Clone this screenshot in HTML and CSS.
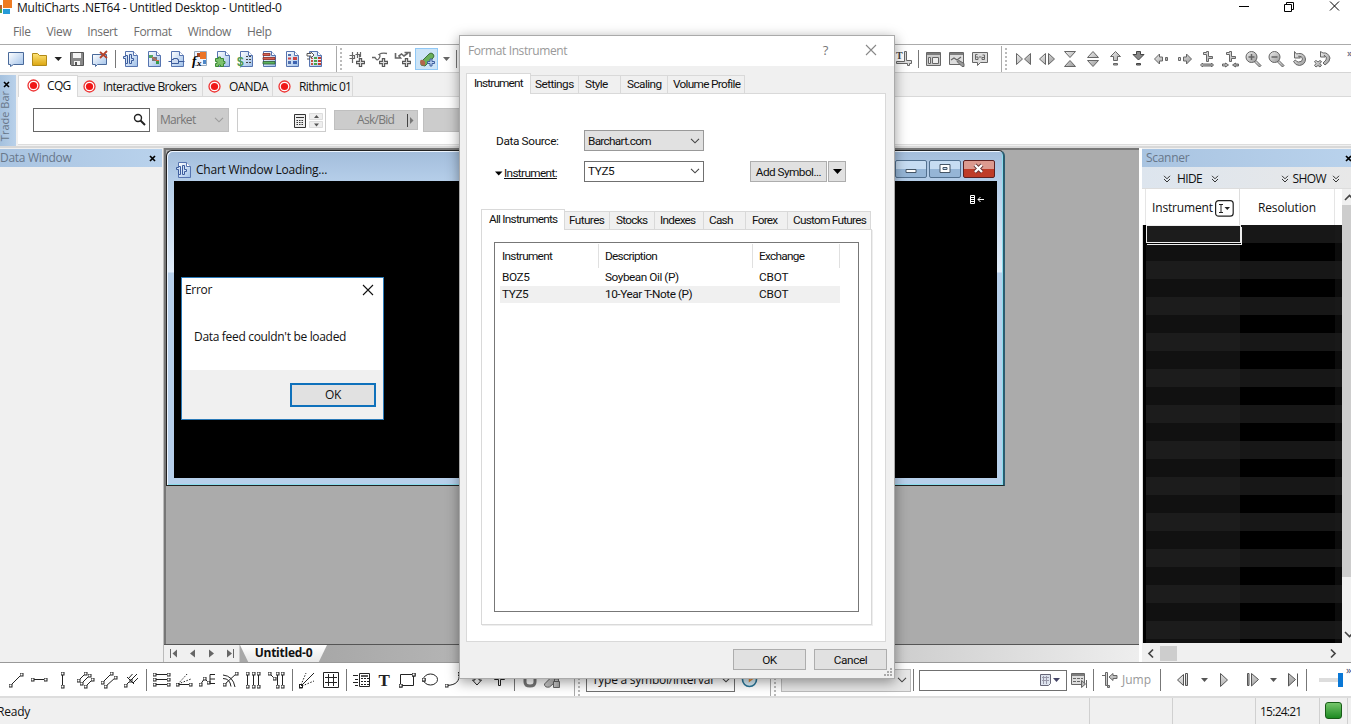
FILE: index.html
```html
<!DOCTYPE html>
<html lang="en">
<head>
<meta charset="utf-8">
<title>MultiCharts .NET64</title>
<link rel="stylesheet" href="styles.css">
</head>
<body>
<svg class="defs" aria-hidden="true">
  <defs>
    <linearGradient id="blue" x1="0" y1="0" x2="1" y2="1"><stop offset="0" stop-color="#fff"/><stop offset="1" stop-color="#9dbfe8"/></linearGradient>
    <linearGradient id="gray" x1="0" y1="0" x2="1" y2="1"><stop offset="0" stop-color="#eee"/><stop offset="1" stop-color="#999"/></linearGradient>
    <linearGradient id="gold" x1="0" y1="0" x2="0" y2="1"><stop offset="0" stop-color="#ffe57a"/><stop offset="1" stop-color="#dba510"/></linearGradient>
    <marker id="h" markerWidth="4" markerHeight="4" refX="2" refY="2" markerUnits="userSpaceOnUse"><rect x=".5" y=".5" width="3" height="3" fill="#fff" stroke="#222"/></marker>
    <symbol id="doc" viewBox="0 0 23 22"><path d="M6.500 3.500h8l4 4v11h-12z" fill="url(#blue)" stroke="#5674b0"/><path d="M14.500 3.500v4h4" fill="#fff" stroke="#5674b0"/></symbol>
    <symbol id="bars" viewBox="0 0 23 22"><path d="M4.500 8.500h2v-1h2v8h-2v-5h-2zM10.500 6.500h2v4h2v2h-2v3h-2z" fill="#cfe0f6" stroke="#3c5c9c"/></symbol>
    <symbol id="plus" viewBox="0 0 8 8"><path d="M3 .5h2v2.500h2.500v2H5v2.500H3V5H.5V3H3z" fill="#ddd" stroke="#555"/></symbol>
    <symbol id="chev" viewBox="0 0 10 6"><path d="M1 .8l4 4 4-4" fill="none" stroke="#444" stroke-width="1.100"/></symbol>
    <symbol id="live" viewBox="0 0 13 13"><circle cx="6.500" cy="6.500" r="5.500" fill="#fff" stroke="#e33" stroke-width="1.300"/><circle cx="6.500" cy="6.500" r="3.600" fill="#f01818"/></symbol>
    <symbol id="dbl" viewBox="0 0 8 8"><path d="M1 .8l3 3 3-3M1 4l3 3 3-3" fill="none" stroke="#333"/></symbol>
  </defs>
</svg>
<div class="app">
  <header class="titlebar">
    <svg class="logo" width="12" height="15" viewBox="0 0 12 15"><path d="M3 0h9v8H3z" fill="#ef7b22"/><path d="M0 5h2v4H0z" fill="#b9602a"/><path d="M0 9h2v4H0z" fill="#55a046"/><path d="M3 9h7v5H3z" fill="#269bd8"/></svg>
    <span class="apptitle">MultiCharts .NET64 - Untitled Desktop - Untitled-0</span>
    <svg class="winbtns" width="110" height="20" viewBox="0 0 110 20" fill="none" stroke="#000"><path d="M-1 6.500h10M44.500 4.500h7v7h-7zM46.500 4.500v-2h7v7h-2M90 1.500l9 9M99 1.500l-9 9"/></svg>
  </header>
  <nav class="menu"><span>File</span><span>View</span><span>Insert</span><span>Format</span><span>Window</span><span>Help</span></nav>

  <div class="toolbar top">
    <svg class="ic" viewBox="0 0 23 22"><path d="M3.500 4.500h15v12h-10l-3 2v-2h-2z" fill="url(#blue)" stroke="#49699a"/></svg>
    <svg class="ic" viewBox="0 0 23 22"><path d="M4.500 5.500h5l2 2h7v10h-14z" fill="url(#gold)" stroke="#b18a18"/></svg>
    <svg class="dd" viewBox="0 0 14 22"><path d="M3.500 9h7.500l-3.700 4z" fill="#222"/></svg>
    <svg class="ic" viewBox="0 0 23 22"><path d="M5.500 4.500h13v13h-12l-1-1z" fill="#888" stroke="#555"/><path d="M8 5h8v5H8zM9 13h6v4H9z" fill="#f5f5f5"/><path d="M10 14h2v3h-2z" fill="#555"/></svg>
    <svg class="ic" viewBox="0 0 23 22"><path d="M4.500 6.500h14v10h-9l-2 2v-2h-3z" fill="url(#blue)" stroke="#49699a"/><path d="M12 4l7 6M19 3l-7 7" stroke="#b5432c" stroke-width="1.800"/></svg>
    <i class="sep s1"></i>
    <svg class="ic" viewBox="0 0 23 22"><use href="#doc"/><use href="#bars"/></svg>
    <svg class="ic" viewBox="0 0 23 22"><use href="#doc"/><path d="M7 7h4v3H7z" fill="#55a860"/><path d="M10 9h5v4h-5z" fill="#777"/><path d="M10 9l5 4M15 12.500h2" stroke="#e64"/><path d="M14 13h3v3h-3z" fill="#3a9a4a"/></svg>
    <svg class="ic" viewBox="0 0 23 22"><use href="#doc"/><path d="M3.500 13.500h3M6.500 11.500h2v-1h4v1h1v4h-7zM13.500 13.500h6" fill="#cddbf0" stroke="#3c5c9c"/></svg>
    <svg class="ic" viewBox="0 0 23 22"><path d="M6.500 3.500h12v14h-12z" fill="#eef4ff" stroke="#9ab"/><path d="M12 4h6v7h-6z" fill="#ec7425"/><path d="M9 5h3v4H9z" fill="#a8471f"/><text x="4" y="17" class="fx">f</text><text x="9" y="18" class="fxs">x</text><path d="M15 12h3v4h-3z" fill="#4b86c8"/></svg>
    <svg class="ic" viewBox="0 0 23 22"><use href="#doc"/><path d="M4.500 10.500h3V9h2v1.500h3v3h1.500v2h-1.500v3H9.500V17h-2v1.500h-3v-3H6v-2H4.500z" fill="#7cc16c" stroke="#3b8a36"/></svg>
    <svg class="ic" viewBox="0 0 23 22"><use href="#doc"/><text x="3" y="18" class="dollar">$</text><path d="M12 8.500h2M15 8.500h2M12 11.500h2M15 11.500h2M12 14.500h2M15 14.500h2" stroke="#444"/></svg>
    <svg class="ic" viewBox="0 0 23 22"><use href="#doc"/><path d="M6 5.500h7v2H6zM6 9.500h12v2H6z" fill="#d8604e" stroke="#8a2a22" stroke-width=".8"/><path d="M6 13.500h12v2.500H6z" fill="#5bb35c" stroke="#2b5a36" stroke-width=".8"/></svg>
    <svg class="ic" viewBox="0 0 23 22"><use href="#doc"/><path d="M8 6h3v2H8zM8 13h3v3H8z" fill="#5070b0"/><path d="M8 9.500h3v2H8zM13 9h4v3h-4z" fill="#c44"/><path d="M13 13h4v3h-4z" fill="#3d63b0"/></svg>
    <svg class="ic" viewBox="0 0 23 22"><use href="#doc"/><path d="M4 5.500h4V4l3 3-3 3V8H4zM4 11h3" fill="#fff" stroke="#555"/><path d="M8 10h2v7H8z" fill="#c55444"/><path d="M11 9h3v8h-3z" fill="#4aa34e"/><path d="M15 9h3v8h-3z" fill="#c33b2e"/><path d="M8 11.500h10M8 14.500h10" stroke="#eee"/></svg>
    <i class="sep grip s2"></i>
    <svg class="ic gs" viewBox="0 0 23 22"><path d="M6.500 4v11M3.500 7.500h5v3h-5M11.500 4v6M9.500 6.500h4v3M14.500 4v5" stroke-width="1.200"/><use href="#plus" x="10" y="10" width="9" height="9"/></svg>
    <svg class="ic gs" viewBox="0 0 23 22"><path d="M3 9.500h3q2 4 4 1t0-4q3-2 8-1" stroke-width="1.300"/><use href="#plus" x="10" y="10" width="9" height="9"/></svg>
    <svg class="ic gs" viewBox="0 0 23 22"><path d="M3.500 5v5h5L7 8l2.500-2L12 8l4-3M12.500 4.500H18V9" stroke-width="1.600"/><use href="#plus" x="10" y="10" width="9" height="9"/></svg>
    <svg class="ic hot" viewBox="0 0 23 22"><path d="M6 14l8-8q2-2 4 0t0 4l-8 8-4-1z" fill="#69b05a" stroke="#3f6f3c"/><path d="M5 14q0-3 3-2t2 5q-4 2-5-3z" fill="#b3654b"/><path d="M15 11h2v2.500h2.500v2H17V18h-2v-2.500h-2.500v-2H15z" fill="#b9d0ef" stroke="#3e5f9e"/></svg>
    <svg class="dd w15" viewBox="0 0 15 22"><path d="M5 9h7l-3.500 4z" fill="#666"/></svg>
    <i class="sep s3"></i>
    <i class="covered"></i>
    <svg class="ic gs" viewBox="0 0 23 22"><text x="3" y="11" class="tee">T</text><path d="M11.500 3.500h2v9h5v3h-2v2h-2v-2h-11v-2h8z" fill="#ddd"/></svg>
    <i class="sep s4"></i>
    <svg class="ic gs" viewBox="0 0 23 22"><path d="M4.500 4.500h14v13h-14z" fill="#ccc"/><path d="M5 6h13" stroke-width="1.600"/><path d="M6.500 9.500h2v6h-2zM10.500 9.500h6v6h-6z" fill="#eee"/></svg>
    <svg class="ic gs" viewBox="0 0 23 22"><path d="M4.500 4.500h14v12h-14z" fill="#ddd"/><path d="M5 6h13" stroke-width="1.600"/><path d="M6 12l3-2 3 2 4-3" stroke-width="1.200"/><path d="M12 13.500l2-1 5 3v3h-2z" fill="#999"/></svg>
    <svg class="ic gs" viewBox="0 0 23 22"><path d="M4.500 4.500h15v10h-7l-3 3v-3h-5z" fill="#ddd"/><path d="M9.500 6.500H7.500v5h2.500v-2.500H8M11 9h2.500M14.500 7h2v4.500h-2.500V9.500h2"/></svg>
    <i class="sep grip s5"></i>
    <svg class="ic gf" viewBox="0 0 23 22"><path d="M4.500 5.500l6 5.500-6 5.500zM18.500 5.500l-6 5.500 6 5.500z"/></svg>
    <svg class="ic gf" viewBox="0 0 23 22"><path d="M10.500 5.500l-6 5.500 6 5.500zM13.500 5.500l6 5.500-6 5.500z"/></svg>
    <svg class="ic gf" viewBox="0 0 23 22"><path d="M6.500 3.500h11L12 9.500zM6.500 18.500h11l-5.500-6z"/></svg>
    <svg class="ic gf" viewBox="0 0 23 22"><path d="M6.500 9.500h11L12 3.500zM6.500 12.500h11l-5.500 6z"/></svg>
    <svg class="ic gf" viewBox="0 0 23 22"><path d="M11.500 3.500l5 5h-3v4h-4v-4h-3zM9.500 15.500h4v1.500h-4z"/></svg>
    <svg class="ic gf dk" viewBox="0 0 23 22"><path d="M9.500 3.500h4v3h3.500l-5.500 5.500L6 6.500h3.500zM9.500 15.500h4v1.500h-4z"/></svg>
    <svg class="ic gf" viewBox="0 0 23 22"><path d="M4.500 11l5-5v3h3v4h-3v3zM15.500 9.500h2v3h-2z"/></svg>
    <svg class="ic gf" viewBox="0 0 23 22"><path d="M18.500 11l-5-5v3h-3v4h3v3zM5.500 9.500h2v3h-2z"/></svg>
    <svg class="ic gf" viewBox="0 0 23 22"><path d="M10.500 3.500h2v5h4v2h-4v3h-2v-7h-3v-2h3zM4.500 17l2-2v1h9v-1l2 2-2 2v-1h-9v1z"/></svg>
    <svg class="ic gf" viewBox="0 0 23 22"><path d="M10.500 3.500h2v5h4v2h-4v3h-2v-7h-3v-2h3zM3.500 16h3v-1l3 2-3 2v-1h-3zM19.500 16h-3v-1l-3 2 3 2v-1h3z"/></svg>
    <svg class="ic gf" viewBox="0 0 23 22"><path d="M14 12.500l5 5-1.500 1.500-5-5z"/><circle cx="9.500" cy="9" r="5.500"/><path d="M6.500 9h6M9.500 6v6" stroke-width="1.500"/></svg>
    <svg class="ic gf" viewBox="0 0 23 22"><path d="M14 12.500l5 5-1.500 1.500-5-5z"/><circle cx="9.500" cy="9" r="5.500"/><path d="M6.500 9h6" stroke-width="1.500"/></svg>
    <svg class="ic gf" viewBox="0 0 23 22"><path d="M6.500 3.500v6.500h6l-2-2q4 0 4 3t-4 3q-2 0-3-2l-2 1.500q2 4 6 4 6-1 6-6.500-1-6-7-5.500l-2 .5z"/></svg>
    <svg class="ic gf" viewBox="0 0 23 22"><path d="M9.500 3.500v5.500h5l-1.500-2q4 2 2 5l-3 3 2 2q5-3 5-7-2-6-7-5z"/><path d="M3.500 13.500l1.500-1 2 1.500 2-1.500 1.500 1-1.500 2 1.500 2-1.500 1.500-2-1.500-2 1.500-1.500-1.500 1.500-2z"/></svg>
    <b class="more">»</b>
  </div>

  <section class="trade">
    <aside class="strip"><svg width="7" height="7" viewBox="0 0 7 7"><path d="M1 1l5 5M6 1L1 6" stroke="#000" stroke-width="1.600"/></svg><span>Trade Bar</span></aside>
    <div class="tradebody">
      <div class="brokers">
        <span class="on b1"><svg width="13" height="13"><use href="#live"/></svg>CQG</span><span class="b2"><svg width="13" height="13"><use href="#live"/></svg>Interactive Brokers</span><span class="b3"><svg width="13" height="13"><use href="#live"/></svg>OANDA</span><span class="b4"><svg width="13" height="13"><use href="#live"/></svg>Rithmic 01</span>
      </div>
      <div class="orderrow">
        <div class="search"><svg width="13" height="13" viewBox="0 0 13 13" fill="none" stroke="#222"><circle cx="5" cy="5" r="3.500" stroke-width="1.400"/><path d="M7.500 7.500l4.500 4.500" stroke-width="2"/></svg></div>
        <div class="market">Market<svg width="10" height="6" opacity=".35"><use href="#chev"/></svg></div>
        <div class="qty"><svg width="30" height="16" viewBox="0 0 30 16"><path d="M.5 1.500h11v13H.5z" fill="#eee" stroke="#333"/><path d="M2 4.500h8" stroke="#333"/><path d="M2.500 7.500h7M2.500 9.500h7M2.500 11.500h7" stroke="#333" stroke-dasharray="1.500 1"/><path d="M15.500 .5h13v6h-13zM15.500 8.500h13v6h-13z" fill="#eee" stroke="#ddd"/><path d="M20 5h5l-2.500-3zM20 10.500h5l-2.500 3z" fill="#555"/></svg></div>
        <div class="ask"><span>Ask/Bid</span><svg width="8" height="13" viewBox="0 0 8 13"><path d="M1.500 0v13" stroke="#444"/><path d="M4 3l3.500 3.500L4 10z" fill="#777"/></svg></div>
        <div class="blank"></div>
      </div>
    </div>
  </section>

  <main class="main">
    <aside class="datawin"><div class="panelhead"><span>Data Window</span><svg width="7" height="7" viewBox="0 0 7 7"><path d="M1 1l5 5M6 1L1 6" stroke="#000" stroke-width="1.700"/></svg></div></aside>
    <section class="mdi">
      <div class="canvas">
        <div class="chartwin">
          <div class="charthead"><svg width="17" height="17" viewBox="4 2 17 17"><use href="#doc" width="23" height="22"/><use href="#bars" width="23" height="22"/></svg><span>Chart Window Loading...</span>
            <div class="mdibtns"><i><svg width="30" height="16" viewBox="0 0 30 16"><path d="M10 8.500h10v3H10z" fill="#fff" stroke="#456"/></svg></i><i><svg width="30" height="16" viewBox="0 0 30 16"><path d="M10 3.500h10v8H10zM13 6.500h4v2h-4z" fill="#fff" stroke="#456" fill-rule="evenodd"/></svg></i><i class="x"><svg width="30" height="16" viewBox="0 0 30 16"><path d="M11 4l7 7M18 4l-7 7" stroke="#633" stroke-width="4"/><path d="M11 4l7 7M18 4l-7 7" stroke="#fff" stroke-width="2.300"/></svg></i></div>
          </div>
          <div class="plot"><svg width="16" height="10" viewBox="0 0 16 10"><path d="M1.500 .5h4v8h-4zM1.500 2.500h4M1.500 4.500h4M1.500 6.500h4M9 4.500h6M11.500 2L9 4.500 11.500 7" fill="none" stroke="#fff"/></svg></div>
        </div>
      </div>
      <div class="sheets">
        <svg width="76" height="18" viewBox="0 0 76 18" fill="#666"><path d="M6.500 4v9" stroke="#666"/><path d="M13 4.500v8L8.500 8.500zM31 4.500v8L26 8.500zM45 4.500v8l5-4zM63 4.500v8l5-4z"/><path d="M69.500 4v9" stroke="#666"/></svg>
        <span class="sheet"><b>Untitled-0</b></span>
      </div>
    </section>
    <aside class="scanner">
      <div class="panelhead"><span>Scanner</span><svg width="7" height="7" viewBox="0 0 7 7"><path d="M1 1l5 5M6 1L1 6" stroke="#000" stroke-width="1.700"/></svg></div>
      <div class="hideshow"><svg width="8" height="8"><use href="#dbl"/></svg><span class="hide">HIDE</span><svg width="8" height="8"><use href="#dbl"/></svg><i></i><svg width="8" height="8"><use href="#dbl"/></svg><span class="show">SHOW</span><svg width="8" height="8"><use href="#dbl"/></svg></div>
      <div class="grid">
        <div class="gridmain">
          <div class="cols"><div class="c1">Instrument<svg width="19" height="17" viewBox="0 0 19 17"><rect x=".6" y=".6" width="17.600" height="15.600" rx="3" fill="#fff" stroke="#222" stroke-width="1.200"/><path d="M4 4.500h4M6 4.500v8M4 12.500h4" stroke="#222"/><path d="M9.500 7h5.500l-2.700 3z" fill="#222"/></svg></div><div class="c2">Resolution</div></div>
          <div class="rows"><div class="r1"><div class="cell"></div></div><div class="r2"></div><div class="r3"></div></div>
        </div>
        <div class="vscroll"><svg width="9" height="16" viewBox="0 0 9 16"><path d="M3 11l4.500-4.500L12 11" fill="none" stroke="#444" stroke-width="1.600"/></svg><i></i><svg width="9" height="16" viewBox="0 0 9 16"><path d="M3 5l4.500 4.500L12 5" fill="none" stroke="#444" stroke-width="1.600"/></svg></div>
      </div>
      <div class="hscroll"><svg width="18" height="17" viewBox="0 0 18 17"><path d="M11 4.500L7 8.500l4 4" fill="none" stroke="#444" stroke-width="1.700"/></svg><i></i><svg class="end" width="18" height="17" viewBox="0 0 18 17"><path d="M7 4.500l4 4-4 4" fill="none" stroke="#444" stroke-width="1.700"/></svg></div>
    </aside>
  </main>

  <div class="toolbar bottom">
    <svg class="ic dr" viewBox="0 0 23 22"><path d="M5.500 16.500L16.500 5.500"/></svg>
    <svg class="ic dr" viewBox="0 0 23 22"><path d="M4.500 10.500H17.500"/></svg>
    <svg class="ic dr" viewBox="0 0 23 22"><path d="M11.500 4.500V17.500"/></svg>
    <svg class="ic dr" viewBox="0 0 23 22"><path d="M4.500 11.500L11.500 4.500M7.500 14.500L15.500 6.500M11.500 17.500L18.500 10.500"/></svg>
    <svg class="ic dr" viewBox="0 0 23 22"><path d="M5.500 13.500L14.500 4.500M8.500 17.500L18.500 8.500"/></svg>
    <svg class="ic dr" viewBox="0 0 23 22"><path d="M5.500 16.500L10.500 11.500"/><path class="nm" d="M7 8l7 7M10.500 11.500L17 5M8.500 9.500l4-4.500M13 14l5-5"/></svg>
    <i class="sep t1"></i>
    <svg class="ic dr" viewBox="0 0 23 22"><path d="M4.500 5.500H18.500M4.500 10.500H18.500M4.500 15.500H18.500"/></svg>
    <svg class="ic dr" viewBox="0 0 23 22"><path d="M4.500 15.500H17.500"/><path class="nm" stroke-dasharray="1.500 1.500" d="M5 15L15 4M5 15l13-5"/></svg>
    <svg class="ic dr" viewBox="0 0 23 22"><path d="M4.500 15.500L8.500 9.500L12.500 13.500"/><path class="nm" d="M19 5.500h-5v9h5M14 10h5"/></svg>
    <svg class="ic dr" viewBox="0 0 23 22"><path d="M5.500 15.500L17.500 4.500"/><path class="nm" d="M4 6q10 1 12 12M4 9.500q7 0 8 8"/></svg>
    <svg class="ic dr" viewBox="0 0 23 22"><path d="M5.500 4.500V17.500M11.500 4.500V17.500M16.500 4.500V17.500"/></svg>
    <svg class="ic dr" viewBox="0 0 23 22"><path d="M4.500 4.500L9.500 9.500M12.500 4.500V17.500M17.500 4.500V17.500"/></svg>
    <i class="sep t2"></i>
    <svg class="ic dr" viewBox="0 0 23 22"><path d="M4.500 17.500L5 17"/><path class="nm" d="M5 17L18 4"/><path class="nm" stroke-dasharray="1.500 1.500" d="M5 16L10 4M6 17l12-5"/></svg>
    <svg class="ic dr" viewBox="0 0 23 22"><path class="nm" d="M4.500 3.500h15v15h-15zM9.500 5v12M14.500 5v12M6 8.500h12M6 13.500h12"/></svg>
    <i class="sep t3"></i>
    <svg class="ic dr" viewBox="0 0 23 22"><path class="nm" d="M9.500 4.500h10v13h-10zM3 6.500h5M5 10.500h3M3 13.500h5M5 16.500h3"/><path class="nm" d="M11 7h7" stroke-width="1.500"/><path class="nm" d="M11 9.500h8M11 12.500h8M11 15.500h8" stroke-dasharray="2 1"/></svg>
    <svg class="ic" viewBox="0 0 23 22"><text x="5.500" y="16.500" class="bigt">T</text></svg>
    <svg class="ic dr" viewBox="0 0 23 22"><path class="nm" d="M4.500 5.500h13v11h-13z"/><path d="M4.500 16.500h.1M17.500 5.500h.1"/></svg>
    <svg class="ic dr" viewBox="0 0 23 22"><ellipse cx="11.500" cy="10.500" rx="7" ry="5.500" fill="none"/><path d="M4.500 10.500h.1"/></svg>
    <svg class="ic dr" viewBox="0 0 23 22"><path d="M4.500 16.500C15 16 17 12 17.500 5"/></svg>
    <svg class="ic dr" viewBox="0 0 23 22"><path class="nm" d="M10 5v6H7.500l4.500 5 4.500-5H14V5z"/></svg>
    <svg class="ic dr" viewBox="0 0 23 22"><path class="nm" d="M10.500 16.500v-6h-4l5-5 5 5h-4v6z"/></svg>
    <i class="sep t4"></i>
    <svg class="ic" viewBox="0 0 23 22"><path d="M7 6v7q0 4 5 4t5-4V6" fill="none" stroke="#777" stroke-width="3"/></svg>
    <svg class="ic gf" viewBox="0 0 23 22"><path d="M3.500 15l8-8h5v4l-8 7q-5 1-5-3z"/><path d="M12.500 12.500h6v6h-6zM13.500 12v-2h4v2"/></svg>
    <i class="sep grip t5"></i>
    <div class="combo sym">Type a symbol/interval<svg width="10" height="6"><use href="#chev"/></svg></div>
    <svg class="ic clock" viewBox="0 0 23 22"><circle cx="11.500" cy="10.500" r="7" fill="#d8eef8" stroke="#2a7698" stroke-width="1.600"/><path d="M11.500 6v6l4-3" fill="none" stroke="#e98b35" stroke-width="1.500"/></svg>
    <i class="sep grip t6"></i>
    <div class="combo dis"><svg width="10" height="6"><use href="#chev"/></svg></div>
    <i class="sep t7"></i>
    <div class="combo date"><svg width="21" height="14" viewBox="0 0 21 14"><path d="M1.500 1.500h10v9l-2 2h-8z" fill="#dde3ee" stroke="#667"/><path d="M3 4.500h7M3 7.500h7M4.500 3v8M7.500 3v8" stroke="#99a"/><path d="M14 5h7l-3.500 4z" fill="#446"/></svg></div>
    <svg class="ic gs" viewBox="0 0 23 22"><path d="M4.500 4.500h13v11h-13z" fill="#ddd"/><path d="M5 6h12" stroke-width="1.600"/><path d="M6 9.500h10M6 12.500h8" stroke-dasharray="3 1"/><path d="M14.500 11.500l4 3.500-4 3.500zM19.500 11v8" fill="#bbb"/></svg>
    <i class="sep t8"></i>
    <svg class="ic gf" viewBox="0 0 23 22"><path d="M6.500 3.500h2v13h2v2h-2v-2h-2zM3 6.500h3.500M10 8l4-3.500v2h4v3h-4v2z"/></svg>
    <span class="jump">Jump</span>
    <i class="sep t9"></i>
    <svg class="play" width="140" height="22" viewBox="1164 0 140 22"><g fill="url(#gray)" stroke="#555"><path d="M1183.500 5.500v11l-6-5.500zM1185.500 4.500h2v12h-2zM1220.500 4.500l7 6.500-7 6.500zM1247.500 4.500h1.500v12h-1.500zM1251.500 4.500l7 6-7 6.500zM1288.500 4.500l7 6-7 6.500zM1297.500 4.500v13"/></g><path d="M1201 9h7l-3.500 4zM1270 9h7l-3.500 4z" fill="#555"/></svg>
    <i class="sep t10"></i>
    <div class="slider"><i></i></div>
    <b class="more">»</b>
  </div>
  <footer class="status"><span class="ready">Ready</span><i class="p1"></i><i class="p2"></i><span class="time">15:24:21</span><span class="led"><i></i></span></footer>
</div>

<div class="error">
  <div class="ehead">Error<svg width="12" height="12" viewBox="0 0 12 12"><path d="M1 1l10 10M11 1L1 11" stroke="#111" stroke-width="1.100"/></svg></div>
  <p>Data feed couldn't be loaded</p>
  <div class="efoot"><button>OK</button></div>
</div>

<div class="dialog">
  <div class="dhead"><span>Format Instrument</span><em>?</em><svg width="12" height="12" viewBox="0 0 12 12"><path d="M1 1l10 10M11 1L1 11" stroke="#888" stroke-width="1.100"/></svg></div>
  <div class="tabs outer"><span class="on">Instrument</span><span>Settings</span><span>Style</span><span>Scaling</span><span>Volume Profile</span></div>
  <div class="page">
    <div class="field f1"><label>Data Source:</label><div class="combo sel">Barchart.com<svg width="10" height="6"><use href="#chev"/></svg></div></div>
    <div class="field f2"><label><svg width="8" height="5" viewBox="0 0 8 5"><path d="M0 .5h7.500L3.700 4.500z" fill="#000"/></svg><u>Instrument:</u></label><div class="combo">TYZ5<svg width="10" height="6"><use href="#chev"/></svg></div><button class="add">Add Symbol...</button><button class="drop"><svg width="9" height="5" viewBox="0 0 9 5"><path d="M0 0h9L4.500 5z" fill="#000"/></svg></button></div>
    <div class="tabs inner"><span class="on">All Instruments</span><span>Futures</span><span>Stocks</span><span>Indexes</span><span>Cash</span><span>Forex</span><span>Custom Futures</span></div>
    <div class="inpage">
      <div class="list">
        <div class="lr lh"><span>Instrument</span><span>Description</span><span>Exchange</span></div>
        <div class="lr"><span>BOZ5</span><span>Soybean Oil (P)</span><span>CBOT</span></div>
        <div class="lr selr"><span>TYZ5</span><span>10-Year T-Note (P)</span><span>CBOT</span></div>
      </div>
    </div>
  </div>
  <div class="dfoot"><button>OK</button><button>Cancel</button></div>
  <svg class="size" width="9" height="9" viewBox="0 0 9 9"><path d="M6 1h2M3 4h2M6 4h2M0 7h2M3 7h2M6 7h2" stroke="#aaa" stroke-width="2"/></svg>
</div>
</body>
</html>
```
FILE: styles.css
```css
* { box-sizing: border-box; }
body { margin: 0; width: 1351px; height: 724px; overflow: hidden; font: 12px/16px "Open Sans", "Noto Sans", sans-serif; color: #111; background: #fff; position: relative; letter-spacing: -0.25px; }
svg { display: block; flex: none; }
.defs { position: absolute; width: 0; height: 0; }
.app { display: flex; flex-direction: column; height: 724px; }
i { display: block; flex: none; font-style: normal; }
button { font: inherit; letter-spacing: inherit; color: #111; background: #e1e1e1; border: 1px solid #adadad; padding: 0; display: flex; align-items: center; justify-content: center; }

.titlebar { height: 20px; flex: none; display: flex; align-items: flex-start; }
.apptitle { margin-left: 5px; }
.winbtns { margin-left: auto; margin-right: 1px; overflow: visible; }
.menu { height: 25px; flex: none; padding: 4px 0 0 13px; display: flex; gap: 16px; color: #6d6d6d; border-bottom: 1px solid #ababab; letter-spacing: -0.36px; }

.toolbar { display: flex; align-items: center; padding-left: 5px; background: #fff; overflow: hidden; }
.top { height: 28px; flex: none; border-bottom: 1px solid #d5d5d5; padding-top: 1px; }
.ic { width: 23px; height: 22px; }
.dd { width: 14px; height: 22px; }
.w15 { width: 15px; }
.hot { background: #cce4f7; outline: 1px solid #90c8f6; outline-offset: -1px; }
.gs { stroke: #666; fill: none; }
.gf { stroke: #666; fill: url(#gray); }
.dk { fill: #888; stroke: #444; }
.fx { font: italic bold 13px "Liberation Serif", serif; }
.fxs { font: italic bold 9px "Liberation Serif", serif; }
.dollar { font: bold 12px "Liberation Sans", sans-serif; fill: #4f9a55; }
.tee { font: bold 10px "Liberation Serif", serif; fill: #444; stroke: none; }
.bigt { font: bold 17px "Liberation Serif", serif; fill: #222; }
.sep { width: 8px; height: 18px; background: linear-gradient(#777, #777) 4px 0 / 1px 100% no-repeat; }
.grip { height: 26px; background: linear-gradient(#aaa, #aaa) 10px 0 / 1px 100% no-repeat, repeating-linear-gradient(#bbb 0 2px, transparent 2px 4px) 14px 2px / 2px 100% no-repeat; }
.s2 { width: 20px; }
.s3 { width: 6px; background-position-x: 3px; }
.covered { width: 434px; }
.s4 { width: 6px; background-position-x: 2px; }
.s5 { width: 21px; }
.more { margin-left: 13px; font: 11px/10px "Open Sans", sans-serif; color: #446; align-self: flex-start; padding-top: 2px; }

.trade { height: 75px; flex: none; display: flex; background: #f0f0f0; border-bottom: 2px solid #d8d8d8; padding-top: 2px; }
.strip { width: 16px; background: linear-gradient(90deg, #a5c1de, #b9d1ea); display: flex; flex-direction: column; align-items: center; padding-top: 6px; overflow: hidden; }
.strip svg { margin-right: 4px; }
.strip span { writing-mode: vertical-rl; transform: rotate(180deg); color: #68778a; margin: 3px 6px 0 0; font-size: 11px; letter-spacing: 0; white-space: nowrap; }
.tradebody { flex: 1; padding-left: 2px; display: flex; flex-direction: column; }
.brokers { height: 22px; flex: none; display: flex; align-items: flex-end; border-bottom: 1px solid #d9d9d9; letter-spacing: -0.65px; }
.brokers span { height: 20px; display: flex; align-items: center; border: 1px solid #d9d9d9; border-left: 0; border-bottom: 0; background: #f0f0f0; padding-left: 5px; white-space: nowrap; }
.brokers svg { margin-right: 7px; }
.brokers .on { height: 22px; margin-bottom: -1px; background: #fff; padding-left: 8px; padding-bottom: 2px; border-left: 1px solid #d9d9d9; }
.b1 { width: 60px; } .b2 { width: 125px; } .b3 { width: 70px; } .b4 { width: 80px; }
.brokers .b3 svg { margin-right: 8px; } .brokers .b4 svg { margin-right: 8px; }
.orderrow { background: #fff; flex: 1; display: flex; align-items: flex-start; padding: 11px 0 0 15px; color: #777; border-bottom: 1px solid #ddd; margin-bottom: 1px; letter-spacing: -0.7px; }
.search { width: 117px; height: 24px; border: 1px solid #666; display: flex; justify-content: flex-end; padding: 4px 3px; }
.market { width: 72px; height: 24px; margin-left: 7px; background: #ccc; border: 1px solid #bfbfbf; display: flex; align-items: center; justify-content: space-between; padding: 0 4px 1px 2px; }
.qty { width: 89px; height: 24px; margin-left: 8px; border: 1px solid #ccc; display: flex; justify-content: flex-end; padding: 4px 1px; }
.ask { width: 84px; height: 20px; margin: 2px 0 0 8px; background: #ccc; border: 1px solid #bfbfbf; display: flex; align-items: center; justify-content: space-between; padding: 0 3px 0 22px; }
.blank { width: 60px; height: 24px; margin-left: 5px; background: #ccc; border: 1px solid #bfbfbf; }

.main { height: 515px; flex: none; display: flex; border-bottom: 1px solid #999; overflow: hidden; }
.panelhead { height: 18px; flex: none; display: flex; justify-content: space-between; align-items: center; background: linear-gradient(90deg, #a9c4e1, #b9d2ec); color: #68778a; letter-spacing: -0.3px; }
.datawin { width: 164px; padding-top: 1px; background: #f0f0f0; border-right: 1px solid #bbb; }
.datawin .panelhead { padding-right: 6px; margin-right: 1px; }
.mdi { width: 975px; display: flex; flex-direction: column; }
.canvas { height: 496px; background: #ababab; border-top: 2px solid #777; border-left: 2px solid #777; }
.chartwin { width: 839px; height: 336px; border: 1px solid #222; border-right: 2px solid #2a5c70; border-radius: 6px 6px 0 0; background: linear-gradient(#a3bddb, #b5cee9 30px, #e3eefa 121px, #b7d0eb 122px, #b7d0eb); box-shadow: inset 1px 1px #eef6ff, inset -1px -1px #8adcec; padding: 0 6px 7px 7px; display: flex; flex-direction: column; }
.charthead { height: 30px; flex: none; display: flex; align-items: center; padding: 7px 0 0 2px; letter-spacing: -0.22px; }
.charthead span { margin-left: 3px; }
.charthead > svg { margin-top: -1px; }
.mdibtns { margin: -2px 2px 0 auto; display: flex; gap: 2px; letter-spacing: 0; }
.mdibtns i { width: 32px; height: 18px; border: 1px solid #52708f; border-radius: 2px; background: linear-gradient(#c6dcf2 50%, #95b5d6 50%); }
.mdibtns .x { background: linear-gradient(#dc9a8f 50%, #be3c28 50%); border-color: #5c2020; }
.plot { flex: 1; background: #000; display: flex; justify-content: flex-end; padding: 14px 12px; }
.sheets { height: 18px; display: flex; border-top: 1px solid #555; background: linear-gradient(90deg, #f0f0f0 0 75px, #a8a8a8 76px 160px, #b4b4b4 290px, #ccc 720px, #eee); }
.sheet { width: 87px; height: 18px; background: linear-gradient(#fff, #e6e6e6); clip-path: polygon(0 0, 100% 0, 90% 100%, 10% 100%); text-align: center; line-height: 16px; letter-spacing: -0.25px; }

.scanner { flex: 1; border-left: 3px solid #fff; padding-top: 1px; background: #f0f0f0; display: flex; flex-direction: column; min-width: 0; }
.scanner .panelhead { padding-left: 4px; margin-right: -1px; }
.hideshow { height: 22px; flex: none; display: flex; align-items: center; padding: 2px 11px 0 21px; background: linear-gradient(90deg, #dde5ee, #e8e8e8); border-bottom: 1px solid #ddd; letter-spacing: -0.6px; }
.hideshow i { flex: 1; }
.hide { margin: 0 9px 0 6px; } .show { margin: 0 6px 0 4px; }
.grid { flex: 1; display: flex; min-height: 0; }
.gridmain { width: 200px; display: flex; flex-direction: column; }
.cols { height: 36px; flex: none; background: #fff; display: flex; align-items: center; letter-spacing: -0.15px; padding-left: 3px; }
.c1 { width: 95px; padding: 2px 0 0 6px; display: flex; align-items: center; gap: 2px; height: 36px; border-left: 1px solid #e5e5e5; border-right: 1px solid #ddd; }
.c2 { width: 95px; padding: 11px 0 0 18px; height: 36px; border-right: 1px solid #e5e5e5; }
.rows { height: 418px; display: flex; background: #000; border-left: 1px solid #ddd; padding-left: 3px; }
.r1 { width: 94px; background: repeating-linear-gradient(#1c1c1c 0 18px, #111 18px 36px); }
.r2 { width: 95px; background: repeating-linear-gradient(#171717 0 18px, #000 18px 36px); }
.r3 { width: 7px; background: repeating-linear-gradient(#191919 0 18px, #0c0c0c 18px 36px); }
.cell { height: 18px; width: 95px; border: 1px solid #eee; box-shadow: 0 1px #000, 1px 2px #eee; position: relative; }
.vscroll { flex: 1; display: flex; flex-direction: column; background: #f0f0f0; overflow: hidden; }
.vscroll i { height: 372px; background: #cdcdcd; margin-bottom: 50px; }
.hscroll { height: 18px; flex: none; display: flex; align-items: center; }
.hscroll i { width: 17px; height: 15px; background: #cdcdcd; }
.end { margin-left: auto; margin-right: 9px; }

.bottom { height: 35px; flex: none; border-bottom: 2px solid #ddd; padding-top: 1px; }
.dr { stroke: #222; fill: none; }
.dr path { marker-start: url(#h); marker-mid: url(#h); marker-end: url(#h); }
.dr .nm { marker: none; }
.bottom .sep { height: 22px; }
.bottom .grip { height: 33px; }
.t1 { width: 7px; background-position-x: 3px; }
.t4 { width: 7px; background-position-x: 3px; }
.t5 { width: 22px; }
.t6 { width: 20px; background-position-x: 9px, 13px; }
.t7 { background-position-x: 2px; }
.t8 { width: 9px; background-position-x: 3px; }
.combo { border: 1px solid #707070; background: #fff; height: 21px; display: flex; align-items: center; justify-content: space-between; padding: 0 3px 0 3px; white-space: nowrap; flex: none; }
.sym { width: 149px; padding-left: 5px; letter-spacing: -0.25px; height: 23px; margin-right: 3px; }
.dis { width: 130px; height: 23px; background: #e6e6e6; border-color: #bbb; justify-content: flex-end; }
.date { width: 148px; justify-content: flex-end; padding-right: 6px; }
.jump { color: #999; width: 32px; letter-spacing: 0; }
.t9 { width: 13px; background-position-x: 9px; }
.t10 { width: 8px; background-position-x: 2px; }
.slider { width: 31px; height: 14px; padding-left: 7px; background: linear-gradient(#ddd, #ddd) 7px 5px / 20px 4px no-repeat; }
.slider i { width: 5px; height: 14px; margin-left: 19px; background: #0a78d6; }
.bottom .more { margin-left: 3px; padding-top: 1px; }
.status { flex: 1; min-height: 0; background: #f0f0f0; display: flex; align-items: center; letter-spacing: -0.2px; overflow: hidden; }
.ready { width: 1089px; margin-left: -3px; padding-top: 2px; }
.status .p1, .status .p2 { width: 83px; height: 26px; border-left: 1px solid #d0d0d0; margin-left: 0; }
.status .p1 { margin-left: 3px; }
.time { border-left: 1px solid #d0d0d0; width: 64px; height: 26px; padding: 6px 0 0 4px; letter-spacing: -0.75px; }
.led { border: 1px solid #d0d0d0; border-width: 0 1px; padding: 4px 5px; height: 26px; width: 29px; margin-left: auto; margin-right: 3px; }
.led i { width: 17px; height: 17px; border: 1px solid #175c17; border-radius: 3px; background: linear-gradient(#75c66b, #1d8a22); }

.error { position: absolute; left: 181px; top: 277px; width: 203px; height: 143px; background: #fff; border: 1px solid #2a7ab8; letter-spacing: -0.32px; }
.ehead { display: flex; justify-content: space-between; padding: 4px 9px 0 3px; height: 50px; }
.ehead svg { margin-top: 2px; }
.error p { margin: 0; height: 42px; padding: 1px 0 0 12px; }
.efoot { height: 49px; background: #f0f0f0; display: flex; justify-content: flex-end; padding: 13px 7px 0; }
.efoot button { width: 86px; height: 24px; border: 2px solid #0f71bb; }

.dialog { position: absolute; left: 459px; top: 35px; width: 436px; height: 644px; background: #f0f0f0; border: 1px solid #aaa; box-shadow: 0 3px 12px rgba(0,0,0,.4); font-family: Roboto, sans-serif; font-size: 11.8px; letter-spacing: -0.4px; }
.dhead { height: 30px; background: #fff; display: flex; align-items: center; padding: 0 17px 2px 8px; color: #999; font: 12px "Open Sans", sans-serif; letter-spacing: -0.4px; }
.dhead em { margin-left: auto; margin-right: 37px; font-style: normal; font-size: 13px; color: #777; }
.tabs { display: flex; align-items: flex-end; white-space: nowrap; position: relative; letter-spacing: -0.75px; }
.tabs span { height: 18px; border: 1px solid #d9d9d9; border-left: 0; border-bottom: 0; background: #f0f0f0; padding-left: 5px; line-height: 17px; }
.tabs .on { background: #fff; height: 21px; border-left: 1px solid #d9d9d9; margin-bottom: -1px; line-height: 18px; }
.outer { height: 27px; margin-left: 6px; letter-spacing: -0.55px; }
.outer span:nth-child(1) { width: 65px; padding-left: 7px; letter-spacing: -0.85px; }
.outer span:nth-child(2) { width: 48px; padding-left: 4px; }
.outer span:nth-child(3) { width: 42px; padding-left: 6px; }
.outer span:nth-child(4) { width: 47px; padding-left: 6px; }
.outer span:nth-child(5) { width: 77px; padding-left: 5px; letter-spacing: -0.7px; }
.page { margin-left: 6px; width: 420px; height: 549px; background: #fff; border: 1px solid #d9d9d9; padding: 36px 0 0 14px; }
.field { display: flex; align-items: center; }
.field label { width: 103px; padding-left: 15px; display: flex; align-items: center; gap: 1px; letter-spacing: -0.35px; }
.f2 label { padding: 3px 0 0 14px; letter-spacing: -0.65px; }
.field .combo { width: 120px; }
.field .sel { background: #e1e1e1; border-color: #999; letter-spacing: -0.7px; }
.f2 { margin-top: 10px; }
.f2 .combo { margin-right: 46px; padding-bottom: 1px; }
.add { width: 77px; height: 21px; letter-spacing: -0.55px; }
.drop { width: 18px; height: 21px; margin-left: 1px; }
.inner { margin-top: 26px; height: 21px; }
.inner .on { width: 84px; padding-left: 7px; }
.inner span:nth-child(2) { width: 45px; padding-left: 4px; letter-spacing: -0.6px; }
.inner span:nth-child(3) { width: 45px; padding-left: 6px; }
.inner span:nth-child(4) { width: 49px; }
.inner span:nth-child(5) { width: 42px; }
.inner span:nth-child(6) { width: 42px; padding-left: 6px; }
.inner span:nth-child(7) { width: 83px; padding-left: 5px; }
.inpage { width: 391px; height: 396px; border: 1px solid #d9d9d9; padding: 12px 0 0 12px; box-shadow: 1px 1px #eee; }
.list { width: 365px; height: 370px; border: 1px solid #777; padding: 1px 5px; }
.lr { display: flex; width: 340px; height: 17px; line-height: 17px; }
.lr span { padding-left: 2px; width: 99px; }
.lr span:nth-child(2) { width: 154px; padding-left: 6px; letter-spacing: -0.45px; }
.lr span:nth-child(3) { width: 87px; padding-left: 6px; letter-spacing: -0.2px; }
.lr.lh { height: 24px; line-height: 24px; margin-bottom: 1px; }
.lr.lh span { border-right: 1px solid #e0e0e0; letter-spacing: -0.7px; }
.selr { background: #f0f0f0; }
.dfoot { display: flex; justify-content: flex-end; gap: 8px; padding: 7px 7px 0; }
.dfoot button { width: 73px; height: 21px; }
.size { position: absolute; right: 1px; bottom: 1px; }
```
